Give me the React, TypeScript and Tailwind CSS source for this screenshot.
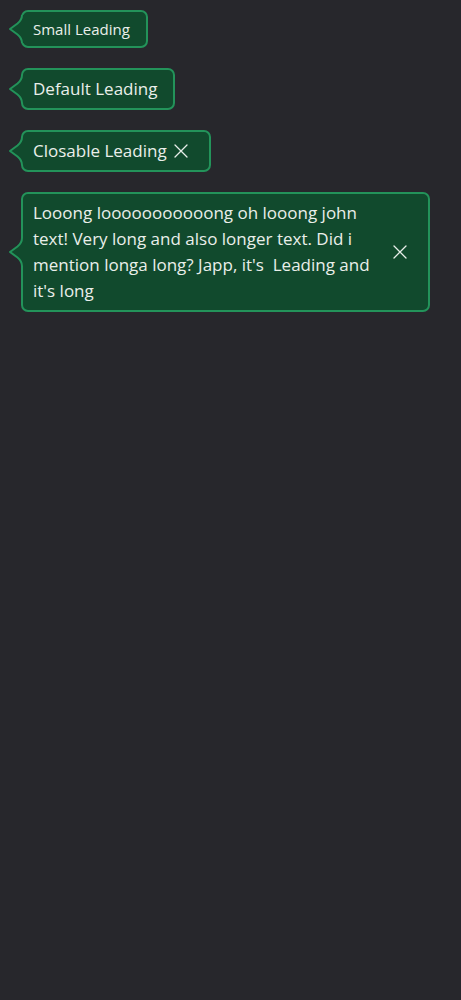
import { ReactNode } from 'react';

// Speech-bubble tail on the left side
function Tail() {
  return (
    <svg
      className="absolute left-[-15px] top-1/2 -translate-y-1/2"
      width="17"
      height="28"
      viewBox="0 0 17 28"
    >
      <path
        d="M14 0 C14 4 12.5 6 9.5 8.5 L2 14 L9.5 19.5 C12.5 22 14 24 14 28 L17 28 L17 0 Z"
        fill="#114a2d"
      />
      <path
        d="M14 0 C14 4 12.5 6 9.5 8.5 L2 14 L9.5 19.5 C12.5 22 14 24 14 28"
        fill="none"
        stroke="#23935a"
        strokeWidth="2"
        strokeLinejoin="round"
      />
    </svg>
  );
}

function CloseIcon() {
  return (
    <svg width="14" height="14" viewBox="0 0 14 14">
      <path d="M1 1 L13 13 M13 1 L1 13" stroke="#e8eee9" strokeWidth="1.3" strokeLinecap="round" />
    </svg>
  );
}

function Bubble({
  children,
  small,
  closable,
}: {
  children: ReactNode;
  small?: boolean;
  closable?: boolean;
}) {
  return (
    <div
      className={
        'relative flex items-center self-start rounded-[7px] border-2 border-[#23935a] bg-[#114a2d] pl-2.5 pr-4 text-[#eaefea] ' +
        (small ? 'py-[7px] text-[15px] leading-5' : 'py-1.5 text-[17px] leading-[26px]')
      }
    >
      <Tail />
      <span>{children}</span>
      {closable && (
        <button className="ml-0.5 flex h-6 w-6 shrink-0 items-center justify-center">
          <CloseIcon />
        </button>
      )}
    </div>
  );
}

export default function App() {
  return (
    <div
      className="min-h-screen bg-[#27272c] pl-[21px] pr-[31px] pt-[10px]"
      style={{ fontFamily: '"Open Sans", "Noto Sans", sans-serif' }}
    >
      <div className="flex flex-col gap-5">
        <Bubble small>Small Leading</Bubble>
        <Bubble>Default Leading</Bubble>
        <Bubble closable>Closable Leading</Bubble>
        <Bubble closable>
          Looong looooooooooong oh looong john text! Very long and also longer text. Did i mention longa long? Japp, it's&nbsp; Leading and it's long
        </Bubble>
      </div>
    </div>
  );
}
